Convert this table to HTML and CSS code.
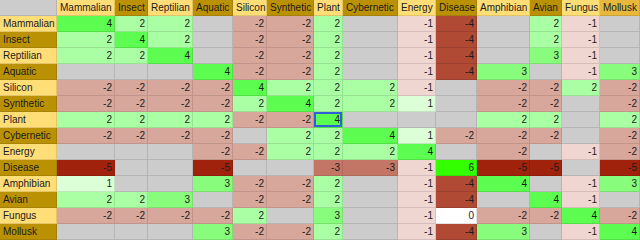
FILE: index.html
```html
<!DOCTYPE html>
<html>
<head>
<meta charset="utf-8">
<link rel="stylesheet" href="styles.css">
</head>
<body>
<table class="grid">
<colgroup>
<col style="width:57px"><col style="width:58px"><col style="width:33px"><col style="width:45px"><col style="width:40px"><col style="width:34px"><col style="width:47px"><col style="width:29px"><col style="width:55px"><col style="width:38px"><col style="width:41px"><col style="width:53px"><col style="width:32px"><col style="width:38px"><col style="width:40px">
</colgroup>
<thead>
<tr><th class="corner"></th><th class="hl">Mammalian</th><th class="hd">Insect</th><th class="hl">Reptilian</th><th class="hd">Aquatic</th><th class="hl">Silicon</th><th class="hd">Synthetic</th><th class="hl">Plant</th><th class="hd">Cybernetic</th><th class="hl">Energy</th><th class="hd">Disease</th><th class="hl">Amphibian</th><th class="hd">Avian</th><th class="hl">Fungus</th><th class="hx">Mollusk</th></tr>
</thead>
<tbody>
<tr><th class="hl">Mammalian</th><td class="p4">4</td><td class="p2">2</td><td class="p2">2</td><td class="e"></td><td class="m2">-2</td><td class="m2">-2</td><td class="p2">2</td><td class="e"></td><td class="m1">-1</td><td class="m4">-4</td><td class="e"></td><td class="p2">2</td><td class="m1">-1</td><td class="e"></td></tr>
<tr><th class="hd">Insect</th><td class="p2">2</td><td class="p4">4</td><td class="p2">2</td><td class="e"></td><td class="m2">-2</td><td class="m2">-2</td><td class="p2">2</td><td class="e"></td><td class="m1">-1</td><td class="m4">-4</td><td class="e"></td><td class="p2">2</td><td class="m1">-1</td><td class="e"></td></tr>
<tr><th class="hl">Reptilian</th><td class="p2">2</td><td class="p2">2</td><td class="p4">4</td><td class="e"></td><td class="m2">-2</td><td class="m2">-2</td><td class="p2">2</td><td class="e"></td><td class="m1">-1</td><td class="m4">-4</td><td class="e"></td><td class="p3">3</td><td class="m1">-1</td><td class="e"></td></tr>
<tr><th class="hd">Aquatic</th><td class="e"></td><td class="e"></td><td class="e"></td><td class="p4">4</td><td class="m2">-2</td><td class="m2">-2</td><td class="p2">2</td><td class="e"></td><td class="m1">-1</td><td class="m4">-4</td><td class="p3">3</td><td class="e"></td><td class="m1">-1</td><td class="p3">3</td></tr>
<tr><th class="hl">Silicon</th><td class="m2">-2</td><td class="m2">-2</td><td class="m2">-2</td><td class="m2">-2</td><td class="p4">4</td><td class="p2">2</td><td class="p2">2</td><td class="p2">2</td><td class="m1">-1</td><td class="e"></td><td class="m2">-2</td><td class="m2">-2</td><td class="p2">2</td><td class="m2">-2</td></tr>
<tr><th class="hd">Synthetic</th><td class="m2">-2</td><td class="m2">-2</td><td class="m2">-2</td><td class="m2">-2</td><td class="p2">2</td><td class="p4">4</td><td class="p2">2</td><td class="p2">2</td><td class="p1">1</td><td class="e"></td><td class="m2">-2</td><td class="m2">-2</td><td class="e"></td><td class="m2">-2</td></tr>
<tr><th class="hl">Plant</th><td class="p2">2</td><td class="p2">2</td><td class="p2">2</td><td class="p2">2</td><td class="m2">-2</td><td class="m2">-2</td><td class="p4 sel">4</td><td class="e"></td><td class="e"></td><td class="e"></td><td class="p2">2</td><td class="p2">2</td><td class="e"></td><td class="p2">2</td></tr>
<tr><th class="hd">Cybernetic</th><td class="m2">-2</td><td class="m2">-2</td><td class="m2">-2</td><td class="m2">-2</td><td class="e"></td><td class="p2">2</td><td class="p2">2</td><td class="p4">4</td><td class="p1">1</td><td class="m2">-2</td><td class="m2">-2</td><td class="m2">-2</td><td class="e"></td><td class="m2">-2</td></tr>
<tr><th class="hl">Energy</th><td class="e"></td><td class="e"></td><td class="e"></td><td class="m2">-2</td><td class="m2">-2</td><td class="p2">2</td><td class="p2">2</td><td class="p2">2</td><td class="p4">4</td><td class="e"></td><td class="m2">-2</td><td class="e"></td><td class="m1">-1</td><td class="m2">-2</td></tr>
<tr><th class="hd">Disease</th><td class="m5">-5</td><td class="e"></td><td class="e"></td><td class="m5">-5</td><td class="e"></td><td class="e"></td><td class="m3">-3</td><td class="m3">-3</td><td class="m1">-1</td><td class="p6">6</td><td class="m5">-5</td><td class="m5">-5</td><td class="e"></td><td class="m5">-5</td></tr>
<tr><th class="hl">Amphibian</th><td class="p1">1</td><td class="e"></td><td class="e"></td><td class="p3">3</td><td class="m2">-2</td><td class="m2">-2</td><td class="p2">2</td><td class="e"></td><td class="m1">-1</td><td class="m4">-4</td><td class="p4">4</td><td class="e"></td><td class="m1">-1</td><td class="p3">3</td></tr>
<tr><th class="hd">Avian</th><td class="p2">2</td><td class="p2">2</td><td class="p3">3</td><td class="e"></td><td class="m2">-2</td><td class="m2">-2</td><td class="p2">2</td><td class="e"></td><td class="m1">-1</td><td class="m4">-4</td><td class="e"></td><td class="p4">4</td><td class="m1">-1</td><td class="e"></td></tr>
<tr><th class="hl">Fungus</th><td class="m2">-2</td><td class="m2">-2</td><td class="m2">-2</td><td class="m2">-2</td><td class="p2">2</td><td class="e"></td><td class="p3">3</td><td class="e"></td><td class="m1">-1</td><td class="z">0</td><td class="m2">-2</td><td class="m2">-2</td><td class="p4">4</td><td class="m2">-2</td></tr>
<tr><th class="hd">Mollusk</th><td class="e"></td><td class="e"></td><td class="e"></td><td class="p3">3</td><td class="m2">-2</td><td class="m2">-2</td><td class="p2">2</td><td class="e"></td><td class="m1">-1</td><td class="m4">-4</td><td class="p3">3</td><td class="e"></td><td class="m1">-1</td><td class="p4">4</td></tr>
</tbody>
</table>
</body>
</html>
```
FILE: styles.css
```css
html, body {
  margin: 0;
  padding: 0;
  overflow: hidden;
  background: #ffffff;
}
.grid {
  table-layout: fixed;
  width: 640px;
  border-collapse: separate;
  border-spacing: 0;
  font-family: "Liberation Sans", Arial, sans-serif;
  font-size: 10px;
  color: #1c1c1c;
}
.grid th, .grid td {
  box-sizing: border-box;
  height: 16px;
  padding: 0 2px 0 3px;
  line-height: 15px;
  border-right: 1px solid rgba(0, 0, 0, 0.11);
  border-bottom: 1px solid rgba(0, 0, 0, 0.11);
  white-space: nowrap;
  overflow: hidden;
  vertical-align: middle;
}
.grid th {
  font-weight: normal;
  text-align: left;
}
.grid td {
  text-align: right;
}
.corner { background: #cccccc; }
.hl { background: #ffdd77; }
.hd { background: #bb9104; }
.hx { background: #e8b83c; }
.e { background: #cccccc; }
.z { background: #ffffff; }
.p1 { background: #ddffd8; }
.p2 { background: #aaffa5; }
.p3 { background: #88fc7c; }
.p4 { background: #5dfc50; }
.p6 { background: #33ff00; }
.m1 { background: #f0d6d0; }
.m2 { background: #d8a79b; }
.m3 { background: #c47666; }
.m4 { background: #b04a35; }
.m5 { background: #a0220c; }
.sel {
  position: relative;
  box-shadow: inset 0 0 0 2px #2f5fd8;
}
.sel::after {
  content: "";
  position: absolute;
  right: -3px;
  bottom: -3px;
  width: 5px;
  height: 5px;
  background: #3a6ae8;
  z-index: 2;
}
```
